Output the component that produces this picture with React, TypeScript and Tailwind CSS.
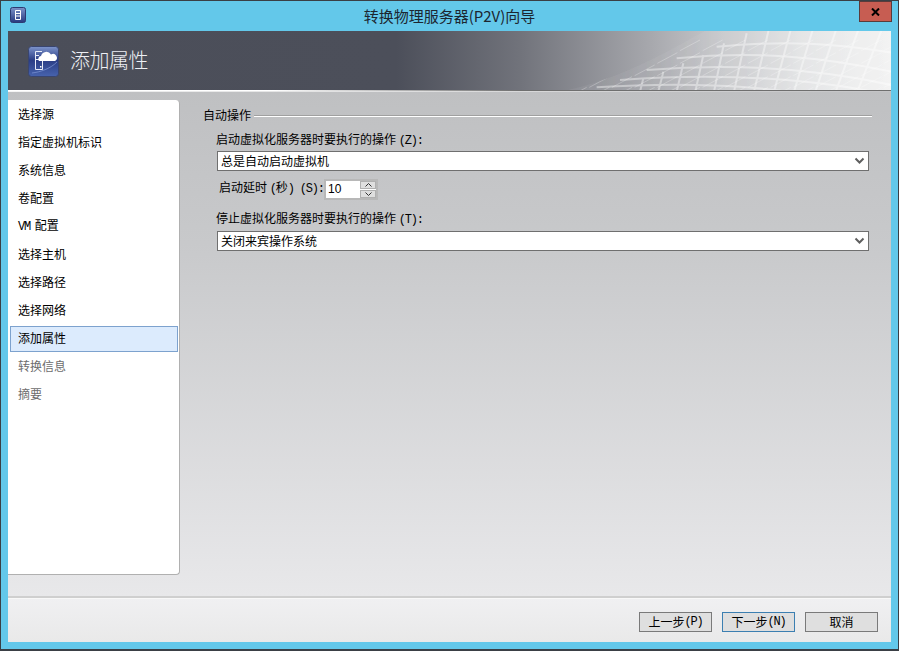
const steps = ["选择源", "指定虚拟机标识", "系统信息", "卷配置", "VM 配置", "选择主机", "选择路径", "选择网络", "添加属性", "转换信息", "摘要"];

// half-width latin like the bitmap dialog font
function Mono({ children }: { children: React.ReactNode }) {
  return <span className="font-['Liberation_Mono',monospace] text-xs tracking-[-1.2px]">{children}</span>;
}

function Chevron() {
  return (
    <svg width="11" height="8" viewBox="0 0 11 8" className="shrink-0">
      <path d="M1.5 1.5 L5.5 5.5 L9.5 1.5" fill="none" stroke="#5f5f5f" strokeWidth="2" />
    </svg>
  );
}

function Select({ value }: { value: string }) {
  return (
    <div className="ml-[14px] mr-[3px] h-5 flex items-center justify-between bg-white border border-[#6f6f6f] pl-[3px] pr-[3px] text-xs text-black">
      <span>{value}</span>
      <Chevron />
    </div>
  );
}

function FooterButton({ children, active }: { children: React.ReactNode; active?: boolean }) {
  return (
    <div className={`w-[73px] h-[20px] flex items-center justify-center bg-[#dfdfdf] border text-xs text-black ${active ? "border-[#3c7fb1]" : "border-[#7a7a7a]"}`}>
      {children}
    </div>
  );
}

const meshCurves = [
  "M590 50 C800 30 950 40 1115 68",
  "M470 85 C700 62 900 80 1115 125",
  "M380 120 C650 98 900 118 1115 165",
  "M300 150 C600 128 850 145 1060 185",
  "M230 172 C500 155 700 170 800 185",
];
const meshRibs = [
  [1085, 0, 1012, 185], [1015, 0, 947, 185], [948, 0, 886, 185], [878, 0, 822, 185],
  [812, 0, 762, 185], [746, 0, 702, 185], [680, 10, 642, 185], [612, 40, 582, 185],
  [550, 75, 526, 185], [490, 100, 470, 185], [430, 125, 415, 185], [370, 145, 360, 185],
];

// faint wire-frame surface on the right of the banner
function Mesh() {
  const hatch: number[] = [];
  for (let x = 200; x < 1500; x += 68) hatch.push(x);
  const rows = [30, 68, 105, 140, 172];
  return (
    <svg className="absolute inset-0 w-full h-full" viewBox="0 0 883 59">
      <defs>
        <clipPath id="meshClip">
          <path d="M120 185 C300 150 450 60 560 0 L1115 0 L1115 185 Z" />
        </clipPath>
      </defs>
      <g transform="translate(512,-1) scale(0.33333)" clipPath="url(#meshClip)">
        <rect x="0" y="0" width="1115" height="185" fill="#ffffff" opacity="0.06" />
        <g fill="none" stroke="#ffffff" strokeWidth="6" opacity="0.4">
          {meshCurves.map((d) => (
            <path key={d} d={d} />
          ))}
          {meshRibs.map(([x1, y1, x2, y2]) => (
            <line key={x1} x1={x1} y1={y1} x2={x2} y2={y2} />
          ))}
        </g>
        <g stroke="#ffffff" strokeWidth="2.5" opacity="0.3">
          {rows.map((y) =>
            hatch.map((x) => <line key={`${x}-${y}`} x1={x - 60} y1={y + 32} x2={x} y2={y} />),
          )}
        </g>
      </g>
    </svg>
  );
}

export default function App() {
  return (
    <div className="w-[899px] h-[651px] flex flex-col bg-[#63c8ea] border-t border-x border-b-2 border-x-[#3a3f45] border-t-[#3a3f45] border-b-[#3a3f45] font-['Noto_Sans_CJK_SC','Liberation_Sans',sans-serif] overflow-hidden">
      {/* Title bar */}
      <div className="h-[30px] shrink-0 flex items-start relative">
        <div className="mt-[6px] ml-[9px] w-4 h-4">
          <svg width="16" height="16" viewBox="0 0 16 16">
            <defs>
              <linearGradient id="tb" x1="0" y1="0" x2="0" y2="1">
                <stop offset="0" stopColor="#7c93c9" />
                <stop offset="1" stopColor="#27397f" />
              </linearGradient>
            </defs>
            <rect x="0.5" y="0.5" width="15" height="15" rx="2" fill="url(#tb)" stroke="#2c3a72" />
            <path d="M5.5 3.5 H10.5 V12.5 H5.5 Z M5.5 6.5 H10.5 M5.5 9 H10.5" fill="none" stroke="#fff" />
          </svg>
        </div>
        <div className="flex-1 text-center text-[15px] leading-[30px] text-[#1c2630] pl-[14px]">转换物理服务器(P2V)向导</div>
        <div className="w-[33px] h-[21px] mr-[6px] flex items-center justify-center bg-[#c75d52] border border-[#5a3b3b]">
          <svg width="9" height="8" viewBox="0 0 9 8">
            <path d="M1 0.5 L8 7.5 M8 0.5 L1 7.5" stroke="#000" strokeWidth="2" />
          </svg>
        </div>
      </div>

      {/* Content frame */}
      <div className="flex-1 mx-[7px] mb-[7px] flex flex-col min-h-0">
        {/* Banner */}
        <div className="h-[59px] shrink-0 relative flex items-center bg-[linear-gradient(90deg,#4b4e59_0%,#4c4f5a_44%,#71737b_58%,#a6a7ac_72.5%,#c8c9cc_81%,#e4e5e6_90%,#f3f3f3_100%)]">
          <Mesh />
          <div className="ml-5 w-[31px] h-[31px] mt-[1px] relative">
            <svg width="31" height="31" viewBox="0 0 31 31">
              <defs>
                <linearGradient id="hd" x1="0" y1="0" x2="0" y2="1">
                  <stop offset="0" stopColor="#7e95cc" />
                  <stop offset="0.45" stopColor="#2a3d85" />
                  <stop offset="1" stopColor="#4763ad" />
                </linearGradient>
              </defs>
              <rect x="0.5" y="0.5" width="30" height="30" rx="3" fill="url(#hd)" stroke="#39456f" />
              <path d="M7.5 23.5 V5.5 H14 M7.5 23.5 H14.5 V15 M7.5 9.5 H11 M7.5 13.5 H11" fill="none" stroke="#e8ecf8" />
              <rect x="12" y="20" width="1.5" height="1.5" fill="#fff" />
              <path d="M11 15 a3 3 0 0 1 2 -5 a5.5 5.5 0 0 1 10 -1.5 a3.5 3.5 0 0 1 4 6.5 Z" fill="#ffffff" />
              <path d="M4 27 C12 26 22 23 29 16" fill="none" stroke="#7f97d6" opacity="0.7" />
            </svg>
          </div>
          <div className="ml-3 -translate-x-px mb-[2px] text-[20px] font-light tracking-[-0.5px] text-[#eef0f5] relative">添加属性</div>
        </div>
        <div className="h-px shrink-0 bg-[linear-gradient(90deg,#ffffff_0%,#ffffff_30%,#6f6f6f_58%,#6f6f6f_100%)]" />
        <div className="h-px shrink-0 bg-[linear-gradient(90deg,#f4f4f4,#c4c4c6)]" />

        {/* Body */}
        <div className="flex-1 min-h-0 flex items-start bg-[linear-gradient(180deg,#bfc0c2_0%,#c8c9cb_30%,#e8e8ea_100%)]">
          <div className="w-[172px] h-[475px] mt-2 shrink-0 bg-white border-r border-b border-[#b0b0b0] rounded-r-[4px] text-xs">
            {steps.map((s, i) =>
              i === 8 ? (
                <div key={s} className="h-[28px] pt-[2px]">
                  <div className="ml-[2px] mr-px h-[26px] pl-[7px] pb-[2px] flex items-center bg-[#dcebfd] border border-[#7da2ce] text-black">{s}</div>
                </div>
              ) : (
                <div key={s} className={`h-[28px] pl-[10px] flex items-center ${i > 8 ? "text-[#6d6d6d]" : "text-black"}`}>
                  {s === "VM 配置" ? (
                    <span>
                      <span className="mr-[2px]">
                        <Mono>VM</Mono>
                      </span>{" "}
                      配置
                    </span>
                  ) : (
                    s
                  )}
                </div>
              ),
            )}
          </div>

          <div className="flex-1 ml-[23px] mr-[19px] mt-[14px] text-xs text-black">
            <div className="flex items-center gap-[3px] h-[17px]">
              <span>自动操作</span>
              <div className="flex-1 h-[2px] mt-[3px] bg-[#a0a0a0] border-b border-white" />
            </div>
            <div className="ml-[13px] mt-[7px] h-[18px] leading-[18px]">
              启动虚拟化服务器时要执行的操作 <Mono>(Z):</Mono>
            </div>
            <div className="mt-[3px]">
              <Select value="总是自动启动虚拟机" />
            </div>
            <div className="mt-[7px] ml-4 flex items-center h-[22px]">
              <span className="w-[105px] shrink-0 mb-[2px] whitespace-nowrap">
                启动延时 <Mono>(</Mono>秒<Mono>) (S):</Mono>
              </span>
              <div className="w-[54px] h-[21px] shrink-0 flex items-center bg-white border-2 border-[#b8b8b8]">
                <span className="flex-1 pl-[2px] font-['Liberation_Sans',sans-serif]">10</span>
                <div className="w-[16px] h-[17px] flex flex-col justify-between">
                  <div className="h-2 flex items-center justify-center bg-[#dfdfdf] border border-[#b0b0b0]">
                    <svg width="7" height="4" viewBox="0 0 7 4">
                      <path d="M0.5 3.5 L3.5 0.5 L6.5 3.5" fill="none" stroke="#333" />
                    </svg>
                  </div>
                  <div className="h-2 flex items-center justify-center bg-[#dfdfdf] border border-[#b0b0b0]">
                    <svg width="7" height="4" viewBox="0 0 7 4">
                      <path d="M0.5 0.5 L3.5 3.5 L6.5 0.5" fill="none" stroke="#333" />
                    </svg>
                  </div>
                </div>
              </div>
            </div>
            <div className="ml-[13px] mt-[9px] h-[18px] leading-[18px]">
              停止虚拟化服务器时要执行的操作 <Mono>(T):</Mono>
            </div>
            <div className="mt-[4px]">
              <Select value="关闭来宾操作系统" />
            </div>
          </div>
        </div>

        {/* Footer */}
        <div className="h-[46px] shrink-0 flex items-start justify-end gap-[10px] pt-[14px] pr-[13px] border-t-2 border-[#cfcfcf] bg-[linear-gradient(180deg,#f0f0f2,#e9e9e9)] shadow-[inset_0_1px_0_#f8f8f8]">
          <FooterButton>
            上一步 <Mono>(P)</Mono>
          </FooterButton>
          <FooterButton active>
            下一步 <Mono>(N)</Mono>
          </FooterButton>
          <FooterButton>取消</FooterButton>
        </div>
      </div>
    </div>
  );
}
